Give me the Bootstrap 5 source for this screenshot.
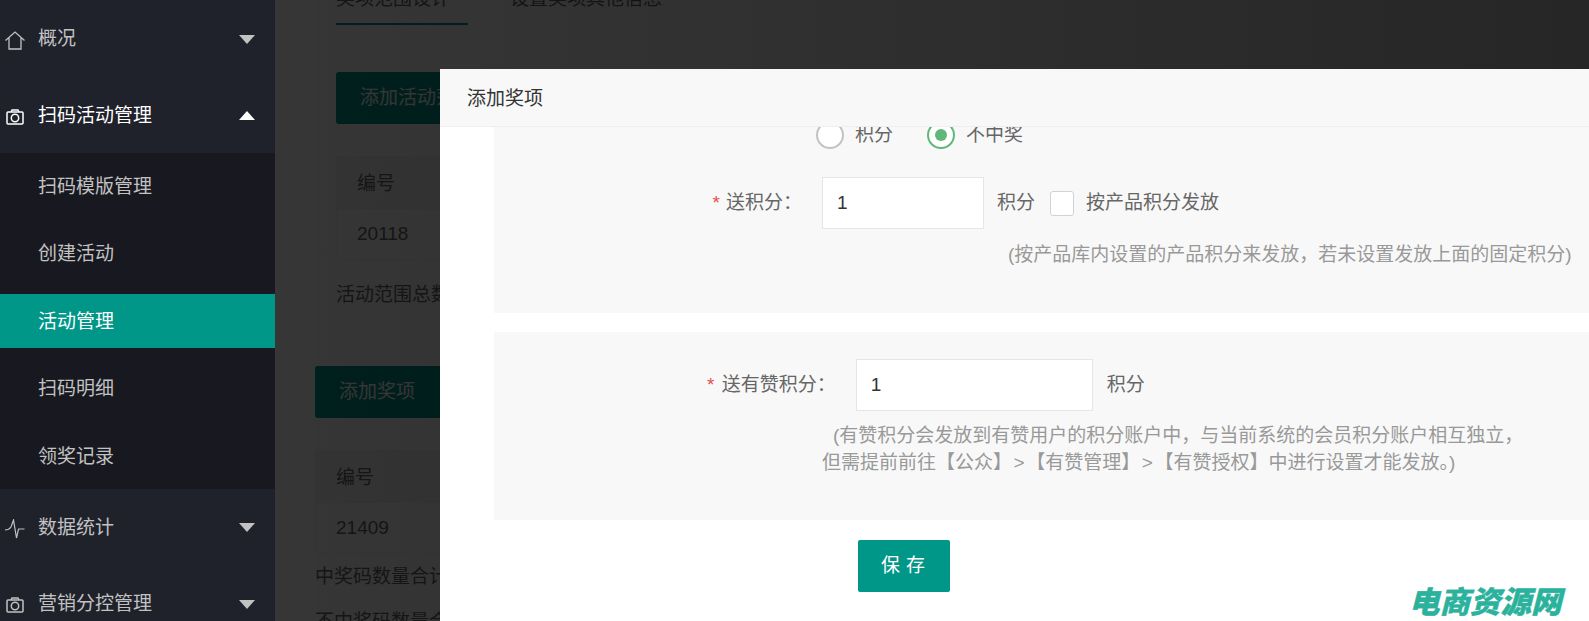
<!DOCTYPE html>
<html lang="zh-CN">
<head>
  <meta charset="UTF-8" />
  <title>添加奖项</title>
  <link href="https://cdn.jsdelivr.net/npm/bootstrap@5.3.3/dist/css/bootstrap.min.css" rel="stylesheet" />
  <style>
    html, body {
      height: 100%;
      overflow: hidden;
    }
    body {
      font-family: "Liberation Sans", "Noto Sans CJK SC", sans-serif;
      font-size: 19px;
      color: #666;
      background: #383838;
    }
    /* sidebar */
    .side-bar {
      width: 275px;
      height: 621px;
      flex: none;
      background: #1f212b;
      color: #c2c2c2;
    }
    .side-top {
      height: 76.5px;
      padding: 2px 20px 0 38px;
      position: relative;
    }
    .side-top.opened { color: #fff; }
    .side-ico {
      position: absolute;
      left: 5px;
      top: 50%;
      width: 20px;
      height: 20px;
      margin-top: -8px;
    }
    .tri-down, .tri-up {
      width: 0;
      height: 0;
      border-left: 8px solid transparent;
      border-right: 8px solid transparent;
    }
    .tri-down { border-top: 9px solid #c2c2c2; }
    .tri-up { border-bottom: 9px solid #fff; }
    .side-sub {
      background: #181920;
      padding: 6px 0;
    }
    .side-sub a {
      display: block;
      height: 54px;
      line-height: 56px;
      margin-bottom: 13.4px;
      padding-left: 38px;
      color: #c2c2c2;
      text-decoration: none;
    }
    .side-sub a:last-child { margin-bottom: 0; }
    .side-sub a.current {
      background: #009688;
      color: #fff;
    }
    /* page under the overlay */
    .page-under {
      flex: 1;
      height: 621px;
      position: relative;
      overflow: hidden;
      background: #fff;
      white-space: nowrap;
    }
    .under-tabs {
      margin: -15px 0 47px 61px;
      height: 40px;
      line-height: 28px;
    }
    .under-tab-on {
      width: 132px;
      height: 40px;
      border-bottom: 2px solid #009688;
    }
    .under-tab-off { margin-left: 42px; }
    .block-a { margin-left: 61px; }
    .block-b { margin-left: 40px; }
    .under-btn {
      width: 400px;
      height: 52px;
      line-height: 52px;
      padding: 0 24px;
      background: #009688;
      color: #fff;
      border-radius: 3px;
      margin-bottom: 32px;
    }
    .under-cell {
      width: 400px;
      height: 52px;
      line-height: 50px;
      padding-left: 20px;
      border: 1px solid #f2f2f2;
    }
    .under-cell.head {
      background: #f4f4f4;
      line-height: 54px;
    }
    .under-text { line-height: 28px; }
    .block-a .under-text { margin: 21px 0 57px; }
    .block-b .under-text { margin-top: 9px; }
    .block-b .under-text + .under-text { margin-top: 17px; }
    .page-shade {
      position: absolute;
      inset: 0;
      background: linear-gradient(90deg, rgba(0,0,0,.79), rgba(0,0,0,.85));
    }
    /* modal */
    .pop-box {
      position: absolute;
      left: 165px;
      top: 69px;
      width: 1300px;
      height: 552px;
      background: #fff;
    }
    .pop-head {
      height: 58px;
      line-height: 59px;
      padding-left: 27px;
      background: #f8f8f8;
      border-bottom: 1px solid #eee;
      color: #333;
    }
    .pop-body {
      height: 494px;
      overflow: hidden;
      padding-left: 54px;
    }
    .pane-one {
      height: 250px;
      margin-top: -64px;
      background: #f8f8f8;
    }
    .pane-two {
      height: 188px;
      margin-top: 19px;
      background: #f8f8f8;
    }
    .radio-row {
      padding: 58px 0 0 322px;
      height: 114px;
      line-height: 28px;
    }
    .fake-radio {
      width: 28px;
      height: 28px;
      border: 2px solid #c2c2c2;
      border-radius: 50%;
      background: #fff;
      flex: none;
    }
    .fake-radio.on {
      border-color: #5fb878;
      padding: 6px;
      margin-left: 34px;
    }
    .fake-radio.on i {
      display: block;
      width: 12px;
      height: 12px;
      border-radius: 50%;
      background: #5fb878;
    }
    .radio-text { margin-left: 11px; }
    .star {
      color: #e2504c;
      margin-right: 6px;
    }
    .field-box {
      height: 52px;
      border: 1px solid #e6e6e6;
      background: #fff;
      color: #333;
      padding: 0 14px;
      font-size: 19px;
      border-radius: 0;
      outline: none;
    }
    .row-one { padding-left: 202px; }
    .row-one .label-text {
      width: 106px;
      text-align: right;
    }
    .row-one .field-box {
      width: 162px;
      margin-left: 20px;
    }
    .row-one .unit-text { margin-left: 13px; }
    .row-one .side-text { margin-left: 12px; }
    .fake-check {
      width: 24px;
      height: 25px;
      margin-left: 15px;
      border: 1px solid #d2d2d2;
      border-radius: 3px;
      background: #fff;
      flex: none;
    }
    .row-two { padding: 27px 0 0 213px; }
    .row-two .star { margin-right: 2px; }
    .row-two .field-box {
      width: 237px;
      margin-left: 20px;
    }
    .row-two .unit-text { margin-left: 14px; }
    .hint {
      color: #999;
      white-space: nowrap;
      line-height: 27px;
    }
    .hint-one { padding: 12px 0 0 514px; }
    .hint-two { padding: 11px 0 0 339px; }
    .hint-three { padding-left: 328px; }
    .save-btn {
      display: block;
      width: 92px;
      height: 52px;
      margin: 20px 0 0 364px;
      padding: 0 0 0 4px;
      border: 0;
      background: #009688;
      color: #fff;
      font-size: 19px;
      border-radius: 2px;
      letter-spacing: 6px;
    }
    .wm-logo {
      position: absolute;
      left: 1409px;
      top: 581px;
      font-family: "Noto Sans CJK SC", sans-serif;
      font-size: 30.5px;
      line-height: 38px;
      font-weight: 900;
      font-style: italic;
      color: #2bb29d;
      -webkit-text-stroke: .4px #2bb29d;
      white-space: nowrap;
    }
  </style>
</head>
<body>
<div class="d-flex">
  <div class="side-bar">
    <div class="side-top d-flex align-items-center justify-content-between">
      <svg class="side-ico" viewBox="0 0 20 20" fill="none" stroke="currentColor" stroke-width="1.3"><path d="M.5 10.500 10 2l9.500 8.500M4 8v11h12V8"/></svg>
      <span>概况</span><span class="tri-down"></span>
    </div>
    <div class="side-top opened d-flex align-items-center justify-content-between">
      <svg class="side-ico" viewBox="0 0 20 20" fill="none" stroke="currentColor" stroke-width="1.5"><rect x="2" y="5" width="16" height="12" rx="1"/><circle cx="10" cy="11" r="3.700"/><path d="M6 5l1-2h6l1 2"/></svg>
      <span>扫码活动管理</span><span class="tri-up"></span>
    </div>
    <div class="side-sub">
      <a href="#">扫码模版管理</a>
      <a href="#">创建活动</a>
      <a href="#" class="current">活动管理</a>
      <a href="#">扫码明细</a>
      <a href="#">领奖记录</a>
    </div>
    <div class="side-top d-flex align-items-center justify-content-between">
      <svg class="side-ico" viewBox="0 0 20 20" fill="none" stroke="currentColor" stroke-width="1.2"><path d="M0 11q4 0 6-3l2.500-7 3 18 2-9h6"/></svg>
      <span>数据统计</span><span class="tri-down"></span>
    </div>
    <div class="side-top d-flex align-items-center justify-content-between">
      <svg class="side-ico" viewBox="0 0 20 20" fill="none" stroke="currentColor" stroke-width="1.5"><rect x="2" y="5" width="16" height="12" rx="1"/><circle cx="10" cy="11" r="3.700"/><path d="M6 5l1-2h6l1 2"/></svg>
      <span>营销分控管理</span><span class="tri-down"></span>
    </div>
  </div>

  <div class="page-under">
    <div class="under-tabs d-flex align-items-start">
      <div class="under-tab-on">奖项范围设计</div>
      <div class="under-tab-off">设置奖项其他信息</div>
    </div>
    <div class="block-a">
      <div class="under-btn">添加活动范围</div>
      <div class="under-cell head">编号</div>
      <div class="under-cell">20118</div>
      <div class="under-text">活动范围总数量</div>
    </div>
    <div class="block-b">
      <div class="under-btn">添加奖项</div>
      <div class="under-cell head">编号</div>
      <div class="under-cell">21409</div>
      <div class="under-text">中奖码数量合计</div>
      <div class="under-text">不中奖码数量合计</div>
    </div>
    <div class="page-shade"></div>

    <div class="pop-box">
      <div class="pop-head">添加奖项</div>
      <div class="pop-body">
        <div class="pane-one">
          <div class="radio-row d-flex align-items-start">
            <span class="fake-radio"></span><span class="radio-text">积分</span>
            <span class="fake-radio on"><i></i></span><span class="radio-text">不中奖</span>
          </div>
          <div class="row-one d-flex align-items-center">
            <span class="label-text"><span class="star">*</span>送积分：</span>
            <input class="field-box" value="1" />
            <span class="unit-text">积分</span>
            <span class="fake-check"></span>
            <span class="side-text">按产品积分发放</span>
          </div>
          <div class="hint hint-one">(按产品库内设置的产品积分来发放，若未设置发放上面的固定积分)</div>
        </div>
        <div class="pane-two">
          <div class="row-two d-flex align-items-center">
            <span class="text-nowrap"><span class="star">*</span> 送有赞积分：</span>
            <input class="field-box" value="1" />
            <span class="unit-text">积分</span>
          </div>
          <div class="hint hint-two">(有赞积分会发放到有赞用户的积分账户中，与当前系统的会员积分账户相互独立，</div>
          <div class="hint hint-three">但需提前前往【公众】&#8202;&gt;&#8202;【有赞管理】&#8202;&gt;&#8202;【有赞授权】中进行设置才能发放。)</div>
        </div>
        <button type="button" class="save-btn">保存</button>
      </div>
    </div>
  </div>
</div>
<div class="wm-logo">电商资源网</div>
<script src="https://cdn.jsdelivr.net/npm/bootstrap@5.3.3/dist/js/bootstrap.bundle.min.js"></script>
</body>
</html>
